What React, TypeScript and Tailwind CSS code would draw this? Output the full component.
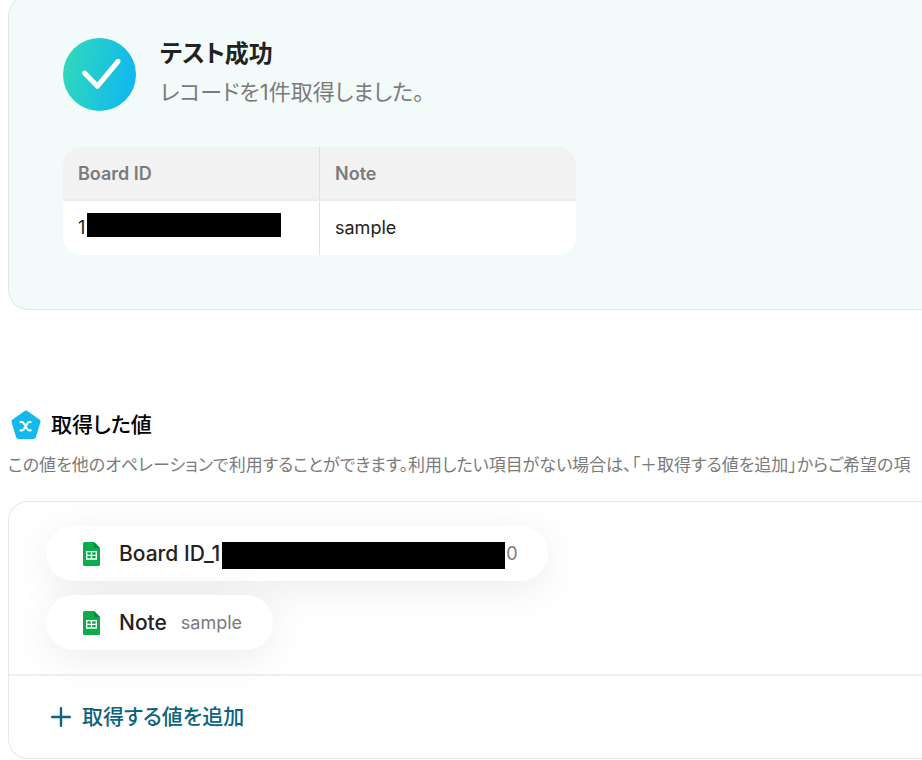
const records = [{ boardId: "1", note: "sample" }]

function CheckIcon() {
  return (
    <svg viewBox="0 0 72 72" className="h-[73px] w-[73px] shrink-0" aria-hidden="true">
      <defs>
        <linearGradient id="check" x1="0" y1="0.4" x2="1" y2="0.6">
          <stop offset="0" stopColor="#2fd9bc" />
          <stop offset="1" stopColor="#10b7f0" />
        </linearGradient>
      </defs>
      <circle cx="36" cy="36" r="36" fill="url(#check)" />
      <path d="M21.3 34.600 34 47.500 54.300 23" fill="none" stroke="#fff" strokeWidth="5" strokeLinecap="round" strokeLinejoin="round" />
    </svg>
  )
}

function PentagonIcon() {
  return (
    <svg viewBox="0 0 30 30" className="h-[30px] w-[30px] shrink-0" aria-hidden="true">
      <path
        d="M15 3 27 11.500 22.500 26.500H7.500L3 11.500Z"
        fill="#14b8eb"
        stroke="#14b8eb"
        strokeWidth="5"
        strokeLinejoin="round"
      />
      <path
        d="M9.600 12C11.500 11.600 12.400 12.400 13.200 13.900L16 18.700C16.800 20.100 17.800 20.800 19.600 20.400M19.600 12C17.800 11.600 16.800 12.400 16 13.900L13.200 18.700C12.400 20.100 11.400 20.800 9.600 20.400"
        fill="none"
        stroke="#fff"
        strokeWidth="2.200"
        strokeLinecap="round"
      />
    </svg>
  )
}

function SheetIcon() {
  return (
    <svg viewBox="0 0 17 24" className="h-6 w-[17px] shrink-0" aria-hidden="true">
      <path d="M1.500 0H11L17 6V22.500Q17 24 15.500 24H1.500Q0 24 0 22.500V1.500Q0 0 1.500 0Z" fill="#0bac4b" />
      <path d="M11 0V4.500Q11 6 12.500 6H17Z" fill="#0a8a3b" />
      <path d="M3.700 9.700H13.300V17H3.700ZM8.500 9.700V17M3.700 13.300H13.300" fill="none" stroke="#fff" strokeWidth="1.300" />
    </svg>
  )
}

function PlusIcon() {
  return (
    <svg viewBox="0 0 20 20" className="h-5 w-5 shrink-0" aria-hidden="true">
      <path d="M10 1.200V18.800M1.200 10H18.800" fill="none" stroke="#0b6480" strokeWidth="2.400" strokeLinecap="round" />
    </svg>
  )
}

export default function App() {
  return (
    <main className="overflow-hidden bg-white pl-2 font-['Inter','Noto_Sans_CJK_JP',sans-serif] text-[#222] [font-feature-settings:'palt']">
      {/* Test result */}
      <section className="-mt-1 rounded-l-[20px] border border-r-0 border-[#e6e6e6] bg-[#f2fbfa] pt-[39px] pb-[54px] pl-[54px]">
        <div className="flex items-center gap-6">
          <CheckIcon />
          <div>
            <h1 className="text-2xl leading-9 font-bold">テスト成功</h1>
            <p className="text-[22px] leading-10 text-[#7b7b7b]">レコードを1件取得しました。</p>
          </div>
        </div>

        <div className="mt-[35px] w-[513px] overflow-hidden rounded-[18px] bg-white">
          <table className="w-full table-fixed text-left text-lg leading-[26px]">
            <thead className="border-b-2 border-[#ececec] bg-[#f2f2f2] text-[#7b7b7b]">
              <tr>
                <th className="border-r border-[#e0e0e0] px-[15px] pt-[14px] pb-3 font-semibold">Board ID</th>
                <th className="px-[15px] pt-[14px] pb-3 font-semibold">Note</th>
              </tr>
            </thead>
            <tbody>
              {records.map((record) => (
                <tr key={record.boardId}>
                  <td className="border-r border-[#e0e0e0] px-[15px] py-[14px]">
                    <div className="flex items-center gap-0.5">
                      {record.boardId}
                      <span className="-mt-0.5 mb-1 h-6 w-[194px] bg-black" />
                    </div>
                  </td>
                  <td className="px-[15px] py-[14px]">{record.note}</td>
                </tr>
              ))}
            </tbody>
          </table>
        </div>
      </section>

      {/* Output values */}
      <section className="mt-[95px]">
        <div className="flex items-center gap-[10px] pl-[3px]">
          <PentagonIcon />
          <h2 className="text-[21px] leading-10 font-medium text-black">取得した値</h2>
        </div>
        <p className="text-[17px] leading-10 whitespace-nowrap text-[#7b7b7b]">
          この値を他のオペレーションで利用することができます。利用したい項目がない場合は、「＋取得する値を追加」からご希望の項
        </p>

        <div className="mt-4 overflow-hidden rounded-l-[20px] border border-r-0 border-[#e8e8e8]">
          <ul className="flex flex-col items-start gap-[14px] border-b-2 border-[#f0f0f0] py-6 pl-[37px]">
            <li className="flex h-[55px] items-center rounded-full bg-white pr-[31px] pl-[37px] shadow-[0_8px_40px_rgba(0,0,0,0.08)]">
              <SheetIcon />
              <span className="ml-[19px] text-[21px] leading-8 font-medium">Board ID_1</span>
              <span className="mt-1 ml-0.5 h-[27px] w-[283px] bg-black" />
              <span className="ml-px text-lg text-[#7b7b7b]">0</span>
            </li>
            <li className="flex h-[55px] items-center rounded-full bg-white pr-[31px] pl-[37px] shadow-[0_8px_40px_rgba(0,0,0,0.08)]">
              <SheetIcon />
              <span className="ml-[19px] text-[21px] leading-8 font-medium">Note</span>
              <span className="ml-[14px] text-lg text-[#7b7b7b]">sample</span>
            </li>
          </ul>
          <div className="py-[21px] pl-[42px]">
            <button type="button" className="flex items-center gap-[11px] text-[21px] leading-10 font-medium text-[#0b6480]">
              <PlusIcon />
              取得する値を追加
            </button>
          </div>
        </div>
      </section>
    </main>
  )
}
